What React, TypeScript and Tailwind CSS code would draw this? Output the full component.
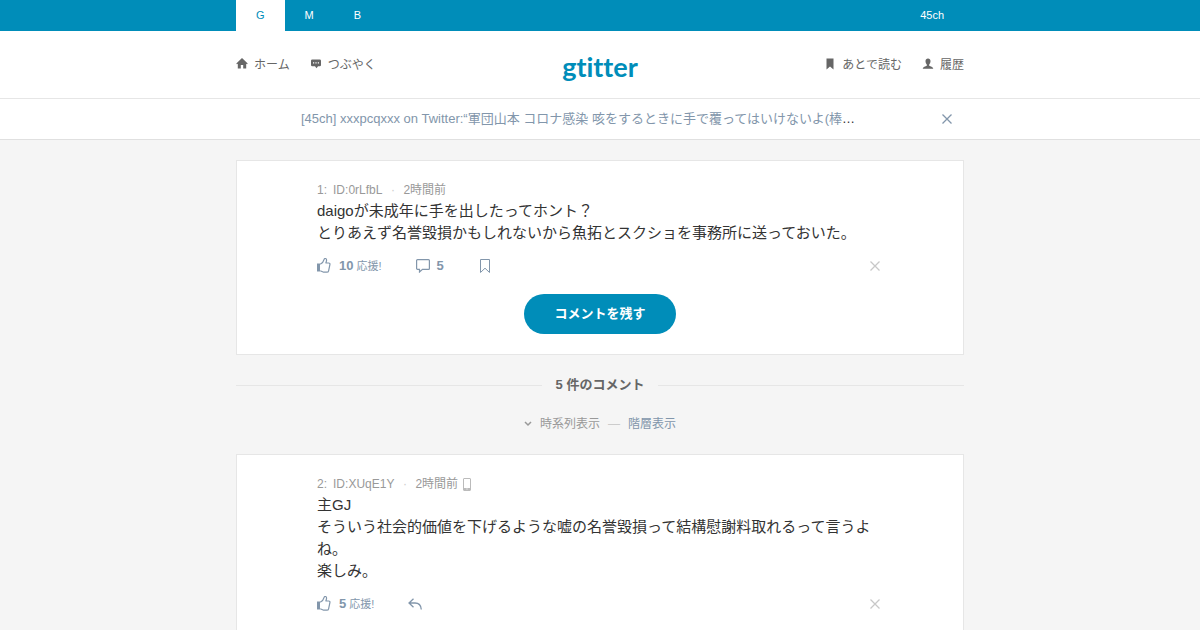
import React from 'react';

const CloseIcon: React.FC<{ className?: string }> = ({ className }) => (
  <svg viewBox="0 0 10 10" className={className} fill="none" stroke="currentColor" strokeWidth="1.3" aria-hidden="true">
    <path d="M.5.5l9 9M9.5.5l-9 9" />
  </svg>
);

const ThumbIcon: React.FC = () => (
  <svg viewBox="0 0 14 16" className="w-3.5 h-4" fill="none" stroke="currentColor" strokeWidth="1.2" aria-hidden="true">
    <path d="M0 5.500h3v8H0z" fill="currentColor" stroke="none" />
    <path
      d="M3.200 6.200C5.400 5.200 6.600 3.400 7 1.600 7.300.6 7.900.400 8.500.500c1 .3 1.200 1.500.9 2.600L8.900 5h2.700c1 0 1.500.7 1.300 1.600l-1.300 6.200c-.2.9-.8 1.400-1.700 1.400H6.700L3.200 12.700"
      strokeLinejoin="round"
    />
  </svg>
);

type PostProps = {
  number: number;
  id: string;
  time: string;
  lines: string[];
  likes: number;
  mobile?: boolean;
  actions: React.ReactNode;
  children?: React.ReactNode;
};

const Post: React.FC<PostProps> = ({ number, id, time, lines, likes, mobile, actions, children }) => (
  <article className="bg-white border border-[#e6e6e6] px-20 pt-[19px] pb-5">
    <div className="flex items-center h-5 text-xs text-[#999]">
      <span>{number}:</span>
      <span className="ml-1.5">ID:{id}</span>
      <span className="w-[21px] text-center text-[#ccc]">·</span>
      <time>{time}</time>
      {mobile && (
        <svg viewBox="0 0 8 13" className="w-2 h-[13px] ml-[5px] text-[#bbb]" fill="none" stroke="currentColor" aria-hidden="true">
          <rect x=".5" y=".5" width="7" height="12" rx=".5" />
          <path d="M1 10h6v2H1z" fill="currentColor" stroke="none" />
          <path d="M3.5 11h1" stroke="#fff" />
        </svg>
      )}
    </div>
    <div className="text-[15px] leading-[22px] text-[#333]">
      {lines.map((line) => (
        <p key={line}>{line}</p>
      ))}
    </div>
    <div className="flex items-center h-5 mt-3 text-[#8296ab]">
      <button type="button" className="flex items-center">
        <ThumbIcon />
        <span className="ml-2 text-[13px] leading-5 font-bold">{likes}</span>
        <span className="ml-[3px] text-[11px] leading-5">応援!</span>
      </button>
      {actions}
      <button type="button" aria-label="閉じる" className="ml-auto mr-[3px] text-[#c8c8c8]">
        <CloseIcon className="w-2.5 h-2.5" />
      </button>
    </div>
    {children}
  </article>
);

const App: React.FC = () => {
  return (
    <div className="min-h-screen bg-[#f5f5f5] font-['Liberation_Sans','Noto_Sans_CJK_JP',sans-serif]">
      <nav className="bg-[#008db9] text-[11px] leading-[31px] text-white">
        <div className="max-w-[728px] mx-auto flex">
          <a href="#g" className="px-5 bg-white text-[#008db9]">G</a>
          <a href="#m" className="px-5">M</a>
          <a href="#b" className="px-5">B</a>
          <a href="#45ch" className="px-5 ml-auto">45ch</a>
        </div>
      </nav>

      <header className="bg-white border-b border-[#e6e6e6]">
        <div className="max-w-[728px] h-[67px] mx-auto grid grid-cols-[1fr_auto_1fr] items-center text-xs text-[#666]">
          <div className="flex gap-5">
            <a href="#home" className="flex items-center">
              <svg viewBox="0 0 12 14" className="w-3 h-3.5 mr-1.5" fill="currentColor" aria-hidden="true">
                <path d="M6 0L.3 5.400l.6.8.900-.5V10.500h3V7h2.400v3.500h3V5.700l.900.5.600-.8z" />
              </svg>
              ホーム
            </a>
            <a href="#post" className="flex items-center">
              <svg viewBox="0 0 12 12" className="w-3 h-3 mr-1.5" fill="currentColor" aria-hidden="true">
                <path d="M2.300.5h7.400A1.300 1.300 0 0 1 11 1.800V6A1.300 1.300 0 0 1 9.700 7.300H8L6.500 9.300 5 7.300H2.300A1.300 1.300 0 0 1 1 6V1.800A1.300 1.300 0 0 1 2.300.5z" />
                <path d="M3 3.300h1.200v1.200H3zM5.400 3.300h1.200v1.200H5.400zM7.800 3.300H9v1.200H7.800z" fill="#fff" />
              </svg>
              つぶやく
            </a>
          </div>
          <a href="#top" className="pt-1 text-[27px] leading-9 font-bold text-[#008db9] font-[Lato,sans-serif] [font-variant-ligatures:none]">gtitter</a>
          <div className="flex gap-5 justify-end">
            <a href="#later" className="flex items-center">
              <svg viewBox="0 0 8 14" className="w-2 h-3.5 mr-2" fill="currentColor" aria-hidden="true">
                <path d="M.5.500h7v11L4 8.500.500 11.500z" />
              </svg>
              あとで読む
            </a>
            <a href="#history" className="flex items-center">
              <svg viewBox="0 0 12 14" className="w-3 h-3.5 mr-1.5" fill="currentColor" aria-hidden="true">
                <path d="M6 .5C4.500.500 3.500 1.500 3.500 3S4 5.700 4.800 6.500V7.700C3.500 8.600 1 8.600.700 10.700h10.600C11 8.600 8.500 8.600 7.200 7.700V6.500C8 5.700 8.500 4.500 8.500 3S7.500.500 6 .500z" />
              </svg>
              履歴
            </a>
          </div>
        </div>
      </header>

      <div className="bg-white border-b border-[#e0e0e0]">
        <div className="max-w-[728px] h-10 mx-auto pl-[65px] pr-3 flex items-center gap-20 text-[#8296ab]">
          <p className="flex-1 min-w-0 truncate text-[13px] leading-5 text-[#333]">
            <a href="#news" className="text-[#8296ab]">
              [45ch] xxxpcqxxx on Twitter:“軍団山本 コロナ感染 咳をするときに手で覆ってはいけないよ(棒読み)
            </a>
          </p>
          <button type="button" aria-label="閉じる">
            <CloseIcon className="w-2.5 h-2.5" />
          </button>
        </div>
      </div>

      <main className="max-w-[728px] mx-auto pt-5">
        <Post
          number={1}
          id="0rLfbL"
          time="2時間前"
          lines={['daigoが未成年に手を出したってホント？', 'とりあえず名誉毀損かもしれないから魚拓とスクショを事務所に送っておいた。']}
          likes={10}
          actions={
            <>
              <button type="button" className="flex items-center ml-[34px] text-[13px] leading-5 font-bold">
                <svg viewBox="0 0 14 14" className="w-3.5 h-3.5 mr-[7px]" fill="none" stroke="currentColor" strokeWidth="1.2" aria-hidden="true">
                  <path d="M1.500.700h11a.900.900 0 0 1 .9.900v7.800a.900.900 0 0 1-.9.900H6.500L3.500 13V10.300h-2a.900.900 0 0 1-.9-.9V1.600a.900.900 0 0 1 .9-.9z" />
                </svg>
                5
              </button>
              <button type="button" aria-label="あとで読む" className="ml-9">
                <svg viewBox="0 0 10 14" className="w-2.5 h-3.5" fill="none" stroke="currentColor" aria-hidden="true">
                  <path d="M.500.500h9v13L5 9.200.500 13.500z" />
                </svg>
              </button>
            </>
          }
        >
          <div className="mt-[18px] text-center">
            <button type="button" className="h-10 px-[30px] rounded-full bg-[#008db9] text-[13px] font-bold text-white align-top">
              コメントを残す
            </button>
          </div>
        </Post>

        <h2 className="flex items-center gap-3.5 mt-5 text-[13px] leading-5 font-bold text-[#666] before:flex-1 before:h-px before:bg-[#e6e6e6] after:flex-1 after:h-px after:bg-[#e6e6e6]">
          5 件のコメント
        </h2>

        <div className="flex items-center justify-center h-5 mt-[19px] mb-5 text-xs text-[#999]">
          <svg viewBox="0 0 8 6" className="w-2 h-1.5 mr-2" fill="none" stroke="currentColor" strokeWidth="1.5" aria-hidden="true">
            <path d="M1 1l3 3 3-3" />
          </svg>
          <span>時系列表示</span>
          <span className="mx-2 text-[#ccc]">—</span>
          <a href="#tree" className="text-[#8296ab]">階層表示</a>
        </div>

        <Post
          number={2}
          id="XUqE1Y"
          time="2時間前"
          mobile
          lines={['主GJ', 'そういう社会的価値を下げるような嘘の名誉毀損って結構慰謝料取れるって言うよね。', '楽しみ。']}
          likes={5}
          actions={
            <button type="button" aria-label="返信" className="ml-[34px]">
              <svg viewBox="0 0 14 12" className="w-3.5 h-3" fill="none" stroke="currentColor" strokeWidth="1.3" aria-hidden="true">
                <path d="M5.500.700L1 5l4.500 4.300M1 5h6c4 0 6 2.300 6.300 6.500" />
              </svg>
            </button>
          }
        />
      </main>
    </div>
  );
};

export default App;
